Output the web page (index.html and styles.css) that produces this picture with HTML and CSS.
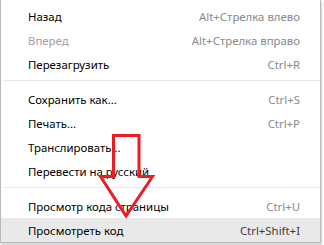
FILE: index.html
```html
<!DOCTYPE html>
<html lang="ru">
<head>
<meta charset="utf-8">
<link rel="stylesheet" href="styles.css">
</head>
<body>
<div class="menu">
  <div class="item"><span class="label">Назад</span><span class="key">Alt+Стрелка влево</span></div>
  <div class="item disabled"><span class="label">Вперед</span><span class="key">Alt+Стрелка вправо</span></div>
  <div class="item"><span class="label">Перезагрузить</span><span class="key">Ctrl+R</span></div>
  <div class="sep"></div>
  <div class="item"><span class="label">Сохранить как...</span><span class="key">Ctrl+S</span></div>
  <div class="item"><span class="label">Печать...</span><span class="key">Ctrl+P</span></div>
  <div class="item"><span class="label">Транслировать...</span><span class="key"></span></div>
  <div class="item"><span class="label">Перевести на русский</span><span class="key"></span></div>
  <div class="sep"></div>
  <div class="item"><span class="label">Просмотр кода страницы</span><span class="key">Ctrl+U</span></div>
  <div class="item active"><span class="label">Просмотреть код</span><span class="key">Ctrl+Shift+I</span></div>
  <svg class="arrow" width="324" height="245" viewBox="0 0 324 245">
    <polygon points="113.5,135.5 139,135.5 139,176.5 152.5,176.5 126,216 100.5,176.5 113.5,176.5" fill="none" stroke="#ec1c24" stroke-width="3" stroke-linejoin="miter"/>
  </svg>
</div>
</body>
</html>
```
FILE: styles.css
```css
html, body {
  margin: 0;
  padding: 0;
  background: #ffffff;
}
body {
  width: 324px;
  height: 245px;
  overflow: hidden;
}
.menu {
  position: relative;
  width: 319px;
  padding-top: 4px;
  background: #ffffff;
  border-left: 1px solid #b9b9b9;
  border-right: 1px solid #b9b9b9;
  border-bottom: 1px solid #b9b9b9;
  box-shadow: 1px 2px 2px rgba(0, 0, 0, 0.18);
  font-family: "Noto Sans", "Open Sans", sans-serif;
  font-size: 11.4px;
  color: #000000;
}
.item {
  height: 24px;
  display: flex;
  align-items: center;
  justify-content: space-between;
  padding: 0 20px 0 27px;
  white-space: nowrap;
}
.key {
  color: #8a8a8a;
}
.disabled .label {
  color: #a0a0a0;
}
.active {
  background: #e9e9e9;
}
.active .key {
  color: #3c3c3c;
}
.sep {
  height: 1px;
  background: #e9e9e9;
  margin: 4px 0 6px 2px;
}
.arrow {
  position: absolute;
  left: -1px;
  top: 0;
  pointer-events: none;
}
```
